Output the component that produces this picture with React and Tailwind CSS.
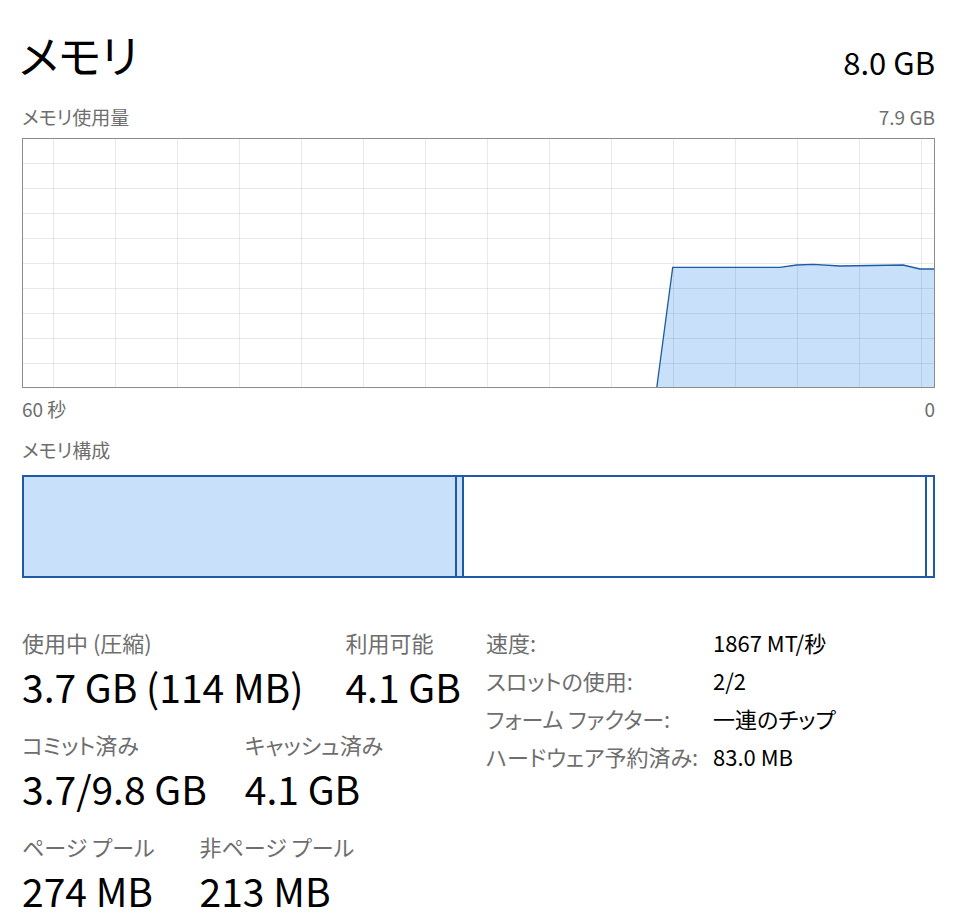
const FONT = "font-['Noto_Sans_CJK_JP','Noto_Sans',sans-serif] [font-feature-settings:'palt']";

const VGRID = [30, 92, 154, 216, 278, 340, 402, 464, 526, 588, 650, 712, 774, 836, 898];
const HGRID = [24, 49, 74, 99, 124, 149, 174, 199, 224];

const USAGE = [
    [633.7, 249], [649.7, 128.3], [757, 128.3], [773.7, 126], [790, 125.3],
    [817, 127], [880, 126], [897, 130], [912, 130],
];

const HW = [
    ['速度:', '1867 MT/秒'],
    ['スロットの使用:', '2/2'],
    ['フォーム ファクター:', '一連のチップ'],
    ['ハードウェア予約済み:', '83.0 MB'],
];

function Stat({ label, value }) {
    return (
        <div className="flex flex-col">
            <div className="text-[22px] leading-[30px] text-[#6e6e6e]">{label}</div>
            <div className="text-[39px] leading-[46px] text-black mt-[6px]">{value}</div>
        </div>
    );
}

function UsageChart() {
    const line = USAGE.map(([x, y]) => `${x},${y}`).join(' ');
    const area = `${line} 912,249`;
    return (
        <div className="h-[250px] border border-[#8b8b8b] bg-white">
            <svg width="911" height="248" viewBox="0 0 911 248" className="block">
                <polygon points={area} fill="#c9e0fb" />
                {VGRID.map(x => <line key={'v' + x} x1={x + 0.5} y1="0" x2={x + 0.5} y2="248" stroke="rgba(0,0,0,0.085)" />)}
                {HGRID.map(y => <line key={'h' + y} x1="0" y1={y + 0.5} x2="911" y2={y + 0.5} stroke="rgba(0,0,0,0.085)" />)}
                <polyline points={line} fill="none" stroke="#1c5ca3" strokeWidth="1.3" />
            </svg>
        </div>
    );
}

export default function App() {
    return (
        <div className={`w-[960px] h-[922px] bg-white pl-[22px] pr-[25px] overflow-hidden ${FONT}`}>
            {/* header */}
            <div className="flex items-end justify-between h-[86px]">
                <div className="text-[45px] leading-[58px] text-black -ml-[3px] mb-[2px]">メモリ</div>
                <div className="text-[31px] leading-[42px] text-black mb-[3px]">8.0 GB</div>
            </div>
            <div className="flex justify-between text-[19px] leading-[26px] text-[#6e6e6e] mt-[18px]">
                <span>メモリ使用量</span>
                <span>7.9 GB</span>
            </div>
            <div className="mt-[8px]">
                <UsageChart />
            </div>
            <div className="flex justify-between text-[19px] leading-[26px] text-[#6e6e6e] mt-[8px]">
                <span>60 秒</span>
                <span>0</span>
            </div>
            <div className="text-[19px] leading-[26px] text-[#6e6e6e] mt-[15px]">メモリ構成</div>

            {/* composition bar */}
            <div className="mt-[12px] h-[103px] border-2 border-[#1f5aa6] flex">
                <div className="w-[433px] bg-[#c9e0fb] border-r-2 border-[#1f5aa6]" />
                <div className="w-[7px] bg-[#c9e0fb] border-r-2 border-[#1f5aa6]" />
                <div className="flex-1 bg-white border-r-2 border-[#1f5aa6]" />
                <div className="w-[6px] bg-white" />
            </div>

            {/* stats */}
            <div className="flex mt-[49px]">
                <div className="w-[464px] flex flex-col gap-[20px]">
                    <div className="flex gap-[42px]">
                        <Stat label="使用中 (圧縮)" value="3.7 GB (114 MB)" />
                        <Stat label="利用可能" value="4.1 GB" />
                    </div>
                    <div className="flex gap-[38px]">
                        <Stat label="コミット済み" value="3.7/9.8 GB" />
                        <Stat label="キャッシュ済み" value="4.1 GB" />
                    </div>
                    <div className="flex gap-[45px]">
                        <Stat label="ページ プール" value="274 MB" />
                        <Stat label="非ページ プール" value="213 MB" />
                    </div>
                </div>
                <div className="flex flex-col text-[22px] leading-[38px] -mt-[4px]">
                    {HW.map(([k, v]) => (
                        <div key={k} className="flex">
                            <span className="w-[227px] text-[#6e6e6e]">{k}</span>
                            <span className="text-black">{v}</span>
                        </div>
                    ))}
                </div>
            </div>
        </div>
    );
}
